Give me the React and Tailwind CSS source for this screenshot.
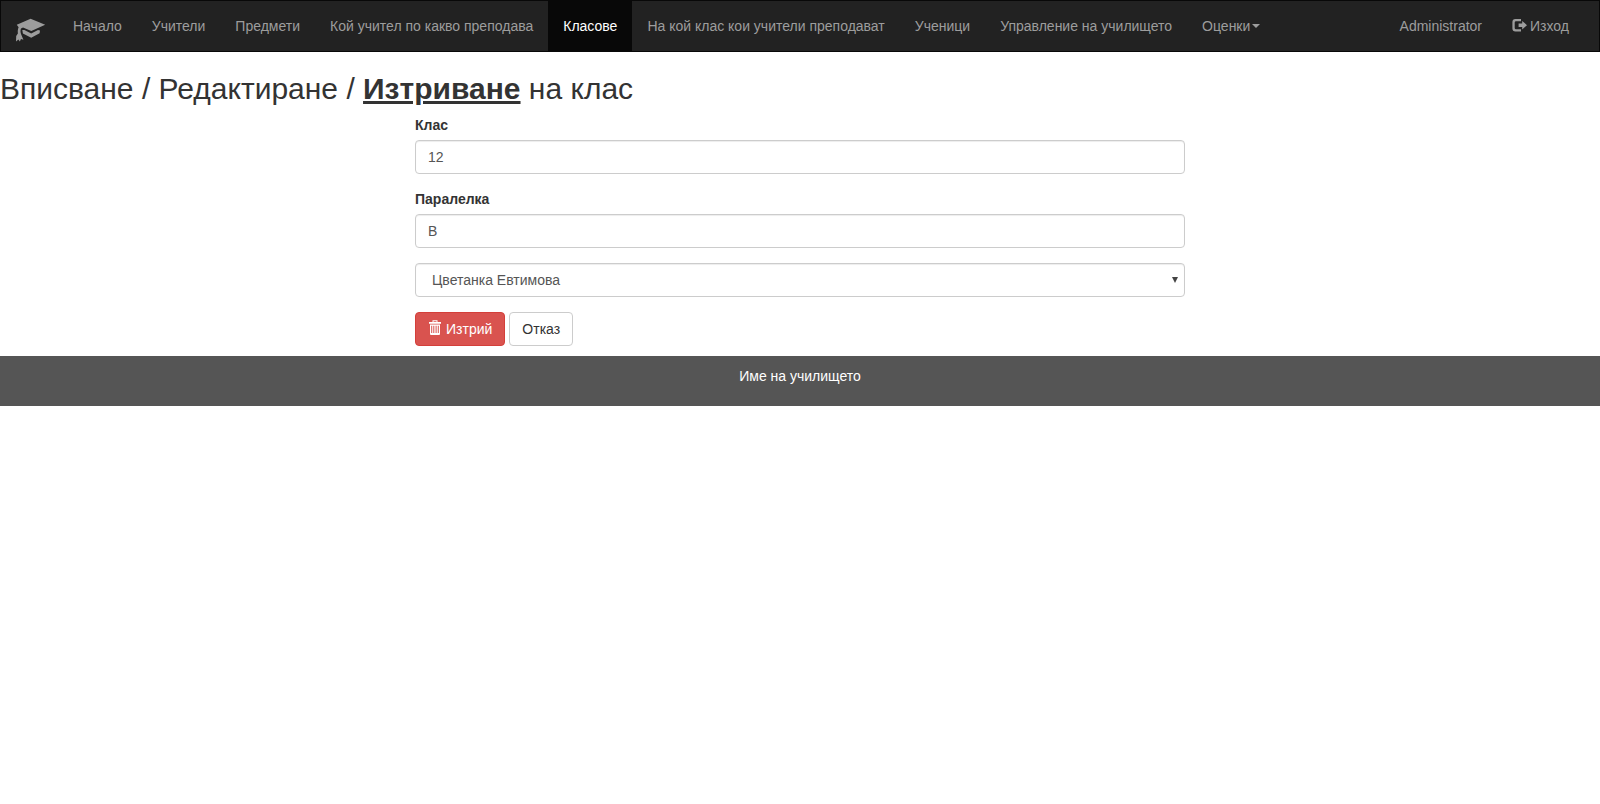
const links = [
  { label: 'Начало' },
  { label: 'Учители' },
  { label: 'Предмети' },
  { label: 'Кой учител по какво преподава' },
  { label: 'Класове', active: true },
  { label: 'На кой клас кои учители преподават' },
  { label: 'Ученици' },
  { label: 'Управление на училището' },
  { label: 'Оценки', caret: true },
];

function CapIcon() {
  return (
    <svg className="block h-6 w-[30px]" viewBox="0 0 30 24" fill="#9d9d9d">
      <path d="M14.6 0.8 L29.2 6.8 L15.3 13 L7 9.4 L5 10.4 C4.3 12 4.4 14 5 16 L7.4 21.8 L5 21 L3.8 23.4 L2.4 21.4 L0 23.6 L0.2 18 L1.9 15.4 C1.6 13 1.8 11 2.6 9.2 L0.8 6.8 Z" />
      <path d="M6.3 12 L8.4 12 L15.2 15.4 L22 12 L24 12.4 L23.6 15.2 L15.2 19.8 L6.9 15.4 Z" />
    </svg>
  );
}

function LogoutIcon() {
  return (
    <svg className="relative -top-px mr-[3px] h-[14px] w-[15px]" viewBox="0 0 15 14" fill="#9d9d9d">
      <path d="M9 1 V3.3 H4 Q2.7 3.3 2.7 4.5 V10 Q2.7 11.2 4 11.2 H9 V13.5 H3.4 Q0.4 13.5 0.4 10.5 V4 Q0.4 1 3.4 1 Z" />
      <path d="M10.2 3 L15 7.2 L10.2 11.4 V8.9 H6.6 V5.6 H10.2 Z" />
    </svg>
  );
}

function TrashIcon() {
  return (
    <svg className="relative -top-[2px] mr-1 h-[15px] w-[14px]" viewBox="0 0 14 15" fill="#fff">
      <path
        fillRule="evenodd"
        d="M4.5 0.3 H9.5 V2 H13 V3.8 H1 V2 H4.5 Z M5.5 1.2 V2 H8.5 V1.2 Z M2 4.6 H12 V13.7 Q12 14.9 11 14.9 H3 Q2 14.9 2 13.7 Z M3.2 5.8 V13 H4.2 V5.8 Z M5.3 5.8 V13 H6.3 V5.8 Z M7.6 5.8 V13 H8.6 V5.8 Z M9.8 5.8 V13 H10.8 V5.8 Z"
      />
    </svg>
  );
}

const field =
  'block h-[34px] w-full rounded border border-[#ccc] bg-white px-3 py-1.5 text-[#555] shadow-[inset_0_1px_1px_rgba(0,0,0,0.075)] outline-none';

export default function App() {
  return (
    <div className="font-['Liberation_Sans',Arial,sans-serif] text-[14px] leading-5 text-[#333]">
      <nav className="flex h-[52px] justify-between border border-[#080808] bg-[#222] px-[15px] text-[#9d9d9d]">
        <div className="flex">
          <a className="w-[42px] shrink-0 pt-[17px]" aria-label="Начало">
            <CapIcon />
          </a>
          {links.map((l) => (
            <a
              key={l.label}
              className={
                l.active
                  ? 'flex items-center whitespace-nowrap bg-[#080808] px-[15px] text-white'
                  : 'flex items-center whitespace-nowrap px-[15px]'
              }
            >
              {l.label}
              {l.caret && (
                <span className="ml-[2px] border-x-4 border-t-4 border-x-transparent border-t-[#9d9d9d]" />
              )}
            </a>
          ))}
        </div>
        <div className="flex">
          <a className="flex items-center px-[15px]">Administrator</a>
          <a className="flex items-center px-[15px]">
            <LogoutIcon />
            Изход
          </a>
        </div>
      </nav>
      <h2 className="mt-5 mb-2.5 text-[30px] leading-[33px]">
        Вписване / Редактиране / <b className="underline">Изтриване</b> на клас
      </h2>
      <form className="mx-auto w-[770px]">
        <div className="mb-[15px]">
          <label htmlFor="grade" className="mb-[5px] block font-bold">Клас</label>
          <input id="grade" className={field} defaultValue="12" />
        </div>
        <div className="mb-[15px]">
          <label htmlFor="section" className="mb-[5px] block font-bold">Паралелка</label>
          <input id="section" className={field} defaultValue="В" />
        </div>
        <div className="mb-[15px] flex h-[34px] items-center justify-between rounded border border-[#ccc] pr-[6px] pl-4 text-[#555] shadow-[inset_0_1px_1px_rgba(0,0,0,0.075)]">
          <span>Цветанка Евтимова</span>
          <svg className="h-[6px] w-[6px]" viewBox="0 0 6 6" fill="#444">
            <path d="M0 0 H6 L3 6 Z" />
          </svg>
        </div>
        <div className="flex gap-1">
          <button type="button" className="flex h-[34px] items-center rounded border border-[#d43f3a] bg-[#d9534f] px-3 text-white">
            <TrashIcon />
            Изтрий
          </button>
          <button type="button" className="h-[34px] rounded border border-[#ccc] bg-white px-3">
            Отказ
          </button>
        </div>
      </form>
      <footer className="mt-2.5 h-[50px] bg-[#555] pt-2.5 text-center text-white">Име на училището</footer>
    </div>
  );
}
